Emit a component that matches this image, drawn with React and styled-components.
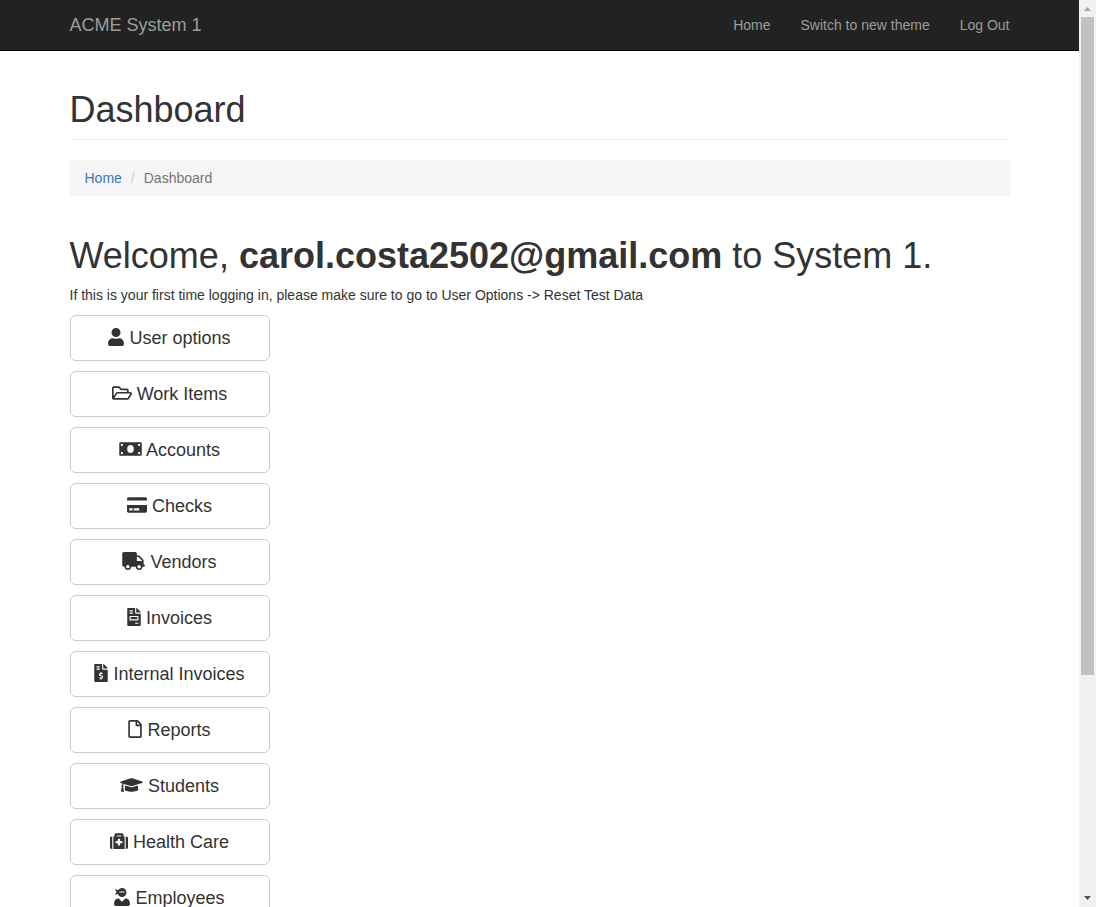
import React from "react";
import styled, { createGlobalStyle } from "styled-components";
import {
  FaUser,
  FaRegFolderOpen,
  FaCreditCard,
  FaTruck,
  FaFileInvoice,
  FaFileInvoiceDollar,
  FaRegFile,
  FaGraduationCap,
  FaMedkit,
  FaUserNinja,
} from "react-icons/fa";

const GlobalStyle = createGlobalStyle`
  *, *::before, *::after { box-sizing: border-box; }
  body {
    margin: 0;
    background: #fff;
    color: #333;
    font-family: "Liberation Sans", Arial, sans-serif;
    font-size: 14px;
    line-height: 20px;
  }
`;

const Window = styled.div`
  display: flex;
  height: 100vh;
  overflow: hidden;
`;

const Page = styled.div`
  flex: 1;
  min-width: 0;
  overflow: hidden;
`;

const Navbar = styled.nav`
  background: #222;
  border-bottom: 1px solid #080808;
`;

const Container = styled.div`
  max-width: 970px;
  margin: 0 auto;
  padding: 0 15px;
`;

const NavRow = styled(Container)`
  display: flex;
  align-items: center;
  justify-content: space-between;
  min-height: 50px;
`;

const Brand = styled.a`
  color: #9d9d9d;
  font-size: 18px;
  text-decoration: none;
`;

const NavLinks = styled.div`
  display: flex;
  gap: 30px;
`;

const NavLink = styled.a`
  color: #9d9d9d;
  text-decoration: none;
`;

const Heading = styled.h1`
  margin: 0;
  font-size: 36px;
  font-weight: normal;
  line-height: 40px;
`;

const PageHeader = styled.header`
  margin: 39px 0 20px;
  padding-bottom: 9px;
  border-bottom: 1px solid #eee;
`;

const Breadcrumb = styled.ol`
  display: flex;
  margin: 0 0 40px;
  padding: 8px 15px;
  list-style: none;
  background: #f5f5f5;
`;

const Crumb = styled.li`
  color: #777;

  & + &::before {
    content: "/";
    padding: 0 9px;
    color: #ccc;
  }
`;

const CrumbLink = styled.a`
  color: #337ab7;
  text-decoration: none;
`;

const Note = styled.p`
  margin: 9px 0 10px;
`;

const Menu = styled.div`
  display: flex;
  flex-direction: column;
  align-items: flex-start;
  gap: 10px;
`;

const MenuButton = styled.button`
  width: 200px;
  height: 46px;
  padding: 10px 16px;
  border: 1px solid #ccc;
  border-radius: 6px;
  background: #fff;
  color: #333;
  font: inherit;
  font-size: 18px;
  line-height: 24px;
  text-align: center;
  white-space: nowrap;
  cursor: pointer;

  svg {
    width: ${(p) => p.$iconWidth}px;
    height: 18px;
    vertical-align: -2px;
  }
`;

const Scrollbar = styled.div`
  display: flex;
  flex-direction: column;
  width: 17px;
  background: #f1f1f1;
`;

const ScrollArrow = styled.svg`
  flex: none;
  width: 17px;
  height: 17px;
  fill: ${(p) => (p.$active ? "#505050" : "#a3a3a3")};
`;

const ScrollTrack = styled.div`
  flex: 1;
  padding: 0 2px;
`;

const ScrollThumb = styled.div`
  height: calc(75% + 3px);
  background: #c1c1c1;
`;

// Banknote with an open oval in the middle and a cut-out in each corner.
function BanknoteIcon(props) {
  return (
    <svg viewBox="0 0 640 512" fill="currentColor" {...props}>
      <path
        fillRule="evenodd"
        d="M32 64h576a32 32 0 0 1 32 32v320a32 32 0 0 1-32 32H32a32 32 0 0 1-32-32V96a32 32 0 0 1 32-32zM48 112v64a64 64 0 0 0 64-64zM592 112h-64a64 64 0 0 0 64 64zM48 400h64a64 64 0 0 0-64-64zM592 400v-64a64 64 0 0 0-64 64zM320 144a94 112 0 0 0 0 224a94 112 0 0 0 0-224z"
      />
    </svg>
  );
}

const menuItems = [
  { label: "User options", Icon: FaUser, iconWidth: 16 },
  { label: "Work Items", Icon: FaRegFolderOpen, iconWidth: 20 },
  { label: "Accounts", Icon: BanknoteIcon, iconWidth: 23 },
  { label: "Checks", Icon: FaCreditCard, iconWidth: 20 },
  { label: "Vendors", Icon: FaTruck, iconWidth: 23 },
  { label: "Invoices", Icon: FaFileInvoice, iconWidth: 14 },
  { label: "Internal Invoices", Icon: FaFileInvoiceDollar, iconWidth: 14 },
  { label: "Reports", Icon: FaRegFile, iconWidth: 14 },
  { label: "Students", Icon: FaGraduationCap, iconWidth: 23 },
  { label: "Health Care", Icon: FaMedkit, iconWidth: 18 },
  { label: "Employees", Icon: FaUserNinja, iconWidth: 16 },
];

export default function App() {
  return (
    <Window>
      <GlobalStyle />
      <Page>
        <Navbar>
          <NavRow>
            <Brand href="#">ACME System 1</Brand>
            <NavLinks>
              <NavLink href="#">Home</NavLink>
              <NavLink href="#">Switch to new theme</NavLink>
              <NavLink href="#">Log Out</NavLink>
            </NavLinks>
          </NavRow>
        </Navbar>
        <Container as="main">
          <PageHeader>
            <Heading>Dashboard</Heading>
          </PageHeader>
          <Breadcrumb>
            <Crumb>
              <CrumbLink href="#">Home</CrumbLink>
            </Crumb>
            <Crumb>Dashboard</Crumb>
          </Breadcrumb>
          <Heading>
            Welcome, <b>carol.costa2502@gmail.com</b> to System 1.
          </Heading>
          <Note>
            If this is your first time logging in, please make sure to go to
            User Options -&gt; Reset Test Data
          </Note>
          <Menu>
            {menuItems.map(({ label, Icon, iconWidth }) => (
              <MenuButton key={label} type="button" $iconWidth={iconWidth}>
                <Icon aria-hidden="true" /> {label}
              </MenuButton>
            ))}
          </Menu>
        </Container>
      </Page>
      <Scrollbar aria-hidden="true">
        <ScrollArrow viewBox="0 0 17 17">
          <path d="M5 11l3.500-4 3.500 4z" />
        </ScrollArrow>
        <ScrollTrack>
          <ScrollThumb />
        </ScrollTrack>
        <ScrollArrow viewBox="0 0 17 17" $active>
          <path d="M5 6l3.500 4 3.500-4z" />
        </ScrollArrow>
      </Scrollbar>
    </Window>
  );
}
